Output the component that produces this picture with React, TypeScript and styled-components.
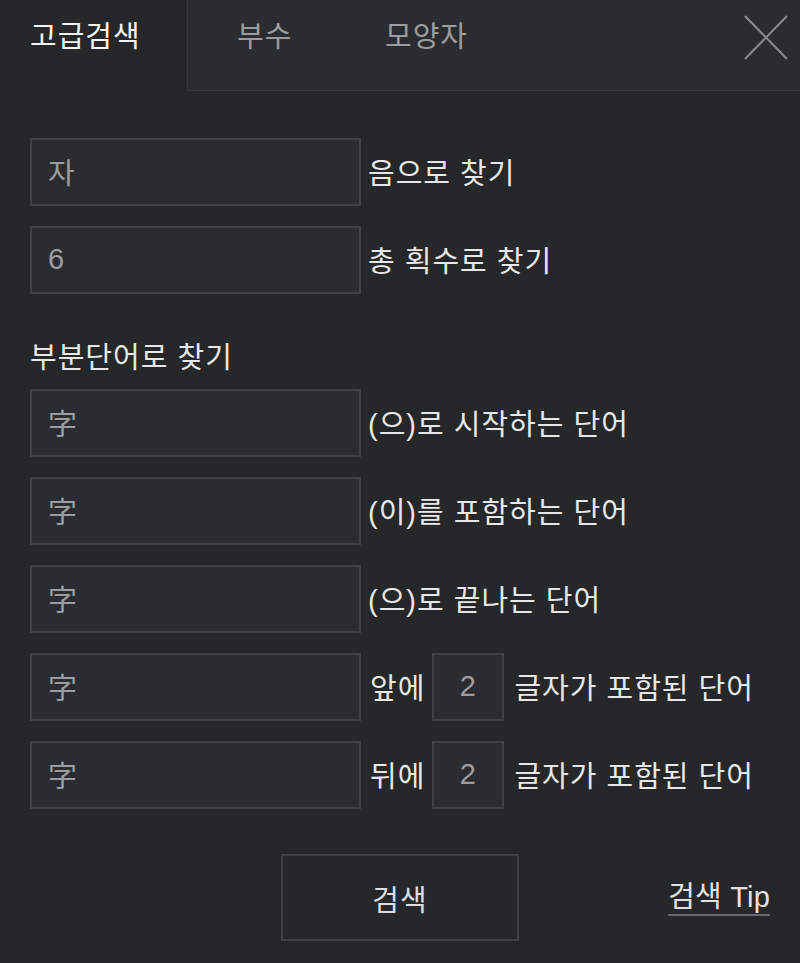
import React from "react";
import styled, { createGlobalStyle } from "styled-components";

const Global = createGlobalStyle`
  html, body { margin: 0; padding: 0; background: #262729; }
  body { font-family: "Liberation Sans", "Noto Sans CJK KR", sans-serif; }
  * { box-sizing: border-box; }
`;

const Page = styled.div`
  width: 800px;
  height: 963px;
  background: #262729;
  color: #e6e6e6;
  font-family: "Liberation Sans", "Noto Sans CJK KR", sans-serif;
  font-size: 29px;
  letter-spacing: 1px;
  display: flex;
  flex-direction: column;
`;

const Header = styled.div`
  display: flex;
  height: 91px;
`;

const ActiveTab = styled.div`
  width: 187px;
  padding: 18px 0 0 30px;
  line-height: 38px;
  color: #f4f4f4;
`;

const TabStrip = styled.div`
  flex: 1;
  display: flex;
  background: #2b2c2f;
  border-left: 1px solid #36373a;
  border-bottom: 1px solid #36373a;
`;

const Tab = styled.div`
  width: 148px;
  padding: 18px 0 0 49px;
  line-height: 38px;
  color: #9c9c9c;
`;

const Close = styled.button`
  margin-left: auto;
  margin-right: 11px;
  margin-top: 14px;
  width: 46px;
  height: 46px;
  padding: 0;
  background: none;
  border: none;
  align-self: flex-start;
`;

const Body = styled.div`
  padding: 47px 30px 0 30px;
  display: flex;
  flex-direction: column;
`;

const Rows = styled.div`
  display: flex;
  flex-direction: column;
  gap: 20px;
`;

const Row = styled.div`
  display: flex;
  align-items: center;
  height: 68px;
`;

const Field = styled.div<{ $w?: number; $center?: boolean }>`
  width: ${(p) => p.$w ?? 331}px;
  height: 68px;
  border: 2px solid #3f4042;
  background: #2b2c30;
  color: #9d9d9d;
  display: flex;
  align-items: center;
  justify-content: ${(p) => (p.$center ? "center" : "flex-start")};
  padding-left: ${(p) => (p.$center ? 0 : 16)}px;
  padding-bottom: 2px;
  flex-shrink: 0;
`;

const Label = styled.span<{ $gap?: number; $after?: number }>`
  margin-left: ${(p) => p.$gap ?? 7}px;
  margin-right: ${(p) => p.$after ?? 0}px;
  color: #e8e8e8;
  white-space: pre;
  padding-bottom: 2px;
`;

const Heading = styled.div`
  margin: 46px 0 13px;
  line-height: 36px;
  color: #e8e8e8;
`;

const Footer = styled.div`
  display: grid;
  grid-template-columns: 1fr auto 1fr;
  align-items: center;
  margin-top: 45px;
`;

const SearchButton = styled.button`
  grid-column: 2;
  width: 238px;
  height: 87px;
  background: transparent;
  border: 2px solid #404143;
  color: #dedede;
  font-family: inherit;
  font-size: 29px;
  letter-spacing: 1px;
`;

const Tip = styled.a`
  justify-self: end;
  color: #e2e2e2;
  letter-spacing: 0.2px;
  text-decoration: underline;
  text-decoration-color: #6a6a6a;
  text-underline-offset: 7px;
  text-decoration-thickness: 2px;
  margin-bottom: 8px;
`;

export default function App() {
  return (
    <Page>
      <Global />
      <Header>
        <ActiveTab>고급검색</ActiveTab>
        <TabStrip>
          <Tab>부수</Tab>
          <Tab>모양자</Tab>
          <Close aria-label="close">
            <svg width="46" height="46" viewBox="0 0 46 46">
              <path d="M2 2 L44 45 M44 2 L2 45" stroke="#8c8c8c" strokeWidth="2" fill="none" />
            </svg>
          </Close>
        </TabStrip>
      </Header>
      <Body>
        <Rows>
          <Row>
            <Field>자</Field>
            <Label>음으로 찾기</Label>
          </Row>
          <Row>
            <Field>6</Field>
            <Label>총 획수로 찾기</Label>
          </Row>
        </Rows>
        <Heading>부분단어로 찾기</Heading>
        <Rows>
          <Row>
            <Field>字</Field>
            <Label>(으)로 시작하는 단어</Label>
          </Row>
          <Row>
            <Field>字</Field>
            <Label>(이)를 포함하는 단어</Label>
          </Row>
          <Row>
            <Field>字</Field>
            <Label>(으)로 끝나는 단어</Label>
          </Row>
          <Row>
            <Field>字</Field>
            <Label $gap={9} $after={7}>앞에</Label>
            <Field $w={72} $center>2</Field>
            <Label $gap={10}>글자가 포함된 단어</Label>
          </Row>
          <Row>
            <Field>字</Field>
            <Label $gap={9} $after={7}>뒤에</Label>
            <Field $w={72} $center>2</Field>
            <Label $gap={10}>글자가 포함된 단어</Label>
          </Row>
        </Rows>
        <Footer>
          <SearchButton>검색</SearchButton>
          <Tip>검색 Tip</Tip>
        </Footer>
      </Body>
    </Page>
  );
}
